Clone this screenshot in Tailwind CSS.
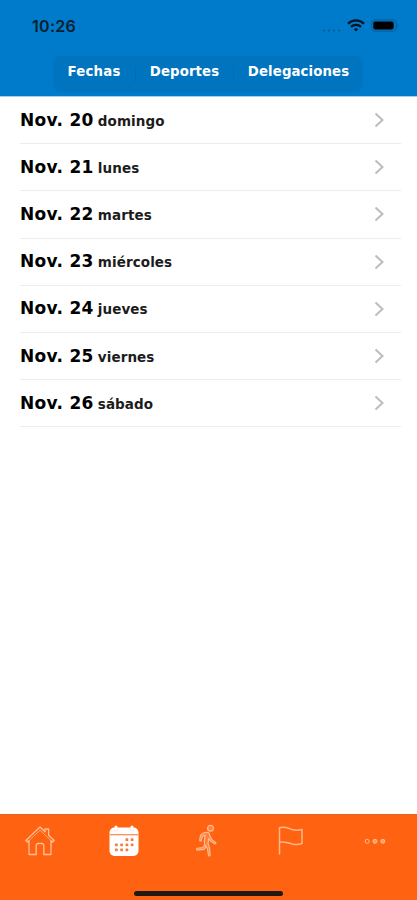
<!DOCTYPE html>
<html lang="es">
<head>
    <meta charset="UTF-8">
    <meta name="viewport" content="width=device-width, initial-scale=1.0">
    <title>Fechas</title>
    <script src="https://cdn.jsdelivr.net/npm/@tailwindcss/browser@4"></script>
</head>
<body class="bg-white text-black font-['DejaVu_Sans',sans-serif]">
    <div class="h-[900px] w-[417px] flex flex-col overflow-hidden">
        <!-- Header -->
        <header class="h-[96px] shrink-0 bg-[#007bcb] box-content border-b border-[#a5cdec]">
            <div class="h-[51px] flex items-center justify-between pl-8 pr-[18px]">
                <span class="font-['Inter',sans-serif] font-semibold text-[16px] tracking-[0.3px] text-[#06202f]">10:26</span>
                <div class="flex items-center">
                    <svg class="mr-[5px] mt-[4px]" width="20" height="14" viewBox="0 0 20 14" fill="#075c96">
                        <circle cx="2" cy="9.5" r="1.1"/><circle cx="7" cy="9.5" r="1.1"/>
                        <circle cx="12" cy="9.5" r="1.1"/><circle cx="17" cy="9.5" r="1.1"/>
                    </svg>
                    <svg class="mr-[6px] -mt-px" width="18" height="13" viewBox="0 0 18 13" fill="none" stroke="#03141f" stroke-width="2.2">
                        <path d="M1 4.7a11.5 11.5 0 0 1 16 0"/>
                        <path d="M4 7.9a7.2 7.2 0 0 1 10 0"/>
                        <path d="M9 12.4 6.8 10.3a3.2 3.2 0 0 1 4.4 0z" fill="#03141f" stroke="none"/>
                    </svg>
                    <svg width="28" height="13" viewBox="0 0 28 13">
                        <rect x="0.8" y="0.8" width="24.4" height="11.4" rx="3.6" fill="none" stroke="#0561a0" stroke-width="1.2"/>
                        <rect x="2.3" y="2.6" width="20.4" height="7.8" rx="1.8" fill="#000"/>
                        <path d="M26.3 4.6v3.8c1.5-.6 1.5-3.2 0-3.8z" fill="#0561a0"/>
                    </svg>
                </div>
            </div>
            <nav class="mt-[5px] ml-[53px] h-[36px] w-[310px] flex items-center rounded-lg bg-[#0074bf] text-white text-[13.3px] font-bold text-center">
                <span class="w-[82px] pb-[5px] tracking-[0.2px]">Fechas</span>
                <span class="h-4 w-px bg-[#006cb3]"></span>
                <span class="w-[97px] pb-[5px] tracking-[0.1px]">Deportes</span>
                <span class="h-4 w-px bg-[#006cb3]"></span>
                <span class="w-[129px] pb-[5px] tracking-[0.1px]">Delegaciones</span>
            </nav>
        </header>

        <!-- Dates -->
        <ul id="dates" class="flex-1 pl-5 pr-4"></ul>

        <!-- Tab bar -->
        <footer class="h-[86px] shrink-0 flex flex-col items-center bg-[#ff6210] border-t border-[#e6641f]">
            <div class="h-[76px] w-[419px] -ml-[2px] self-start grid grid-cols-5 justify-items-center pt-[8px]">
                <svg width="32" height="36" viewBox="0 0 32 36" fill="none" stroke="#ffc19b" stroke-width="1.3" stroke-linejoin="round">
                    <path d="M1.8 17.5 16 4l5 4.800V6h3.600v6.300l5.600 5.200-1.600 1.500-1.600-1.400v13.900h-7.200V22.500c0-1.400-.6-2-2-2h-3.600c-1.400 0-2 .6-2 2v9H5V17.600L3.400 19z"/>
                    <path d="m5 17.600 11-10.400 11 10.400" stroke-width="0.700"/>
                </svg>
                <svg width="32" height="36" viewBox="0 0 32 36">
                    <rect x="1.500" y="4.600" width="29" height="28.400" rx="5" fill="#fff"/>
                    <path d="M8 4v3M24 4v3" stroke="#fff" stroke-width="3" stroke-linecap="round"/>
                    <path d="M6 6q.2 2 2 2t2-2M22 6q.2 2 2 2t2-2" stroke="#ffe0cd" stroke-width=".8" fill="none"/>
                    <path d="M1.500 11.700h29" stroke="#ff8d55" stroke-width="1.300"/>
                    <g fill="#f47e42">
                        <rect x="17.500" y="15.200" width="2.800" height="2.800" rx=".6"/><rect x="22.700" y="15.200" width="2.800" height="2.800" rx=".6"/>
                        <rect x="7" y="20.400" width="2.800" height="2.800" rx=".6"/><rect x="12.200" y="20.400" width="2.800" height="2.800" rx=".6"/><rect x="17.500" y="20.400" width="2.800" height="2.800" rx=".6"/><rect x="22.700" y="20.400" width="2.800" height="2.800" rx=".6"/>
                        <rect x="7" y="25.400" width="2.800" height="2.800" rx=".6"/><rect x="12.200" y="25.400" width="2.800" height="2.800" rx=".6"/><rect x="17.500" y="25.400" width="2.800" height="2.800" rx=".6"/>
                    </g>
                </svg>
                <svg width="24" height="36" viewBox="0 0 24 36" fill="#ff8140" stroke="#ffbc94" stroke-width="1.200" stroke-linejoin="round" stroke-linecap="round">
                    <circle cx="15.500" cy="5.300" r="2.900"/>
                    <path d="m9.400 22-1.500 2.700-6 .7q-1 .9.200 1.700l7-.8 2-2.800"/>
                    <path d="M13.400 9.600c-3.500-.6-6 .5-7.600 2.300-.7 1.700-1 4-1.100 5.600q.7 1.300 1.600.1l1.100-4.300 2.600-1.200-.7 6.500c-.1 2 .2 2.900 1.500 4.200l1.700 3 1 6.500q1 1.300 1.700-.1l-.7-7.400-1.500-4.200.9-5.200 1.900 2.800 4.200 2.700q1.400 0 .6-1.300l-3.400-2.600-2.400-4.200c.1-1.500-.2-2.600-1.400-3.200z"/>
                </svg>
                <svg width="28" height="36" viewBox="0 0 28 36" fill="none" stroke="#ffb78c" stroke-width="1.500" stroke-linejoin="round" stroke-linecap="round">
                    <path d="M2.500 31V4.700C8 3.200 10.500 5 15 6.500c3 .8 6.500.8 10 .1v13.900c-3.500 1.200-6.500 1.200-10 .4-4.500-1.500-7-2.600-12.500-1.700"/>
                </svg>
                <svg width="24" height="36" viewBox="0 0 24 36" fill="#ffa06b" stroke="#ffbd96" stroke-width="1">
                    <circle cx="4.200" cy="18.300" r="2" fill="none"/><circle cx="12" cy="18.300" r="2"/><circle cx="19.800" cy="18.300" r="2"/>
                </svg>
            </div>
            <div class="h-[5px] w-[149px] rounded-full bg-[#21180f]"></div>
        </footer>
    </div>

    <script>
        const dates = [
            ['20', 'domingo'],
            ['21', 'lunes'],
            ['22', 'martes'],
            ['23', 'miércoles'],
            ['24', 'jueves'],
            ['25', 'viernes'],
            ['26', 'sábado'],
        ];

        document.getElementById('dates').innerHTML = dates.map(([num, day]) => `
            <li class="h-[47.2px] flex items-center justify-between border-b border-[#ececec] pr-4">
                <p class="flex items-baseline leading-none">
                    <span class="text-[17px] font-bold tracking-[0.3px]">Nov. ${num}</span>
                    <span class="ml-1 text-[13.5px] font-bold tracking-[0.1px] text-[#1c1c1c]">${day}</span>
                </p>
                <svg width="11" height="16" viewBox="0 0 11 16" fill="none" stroke="#bdbdbd" stroke-width="2">
                    <path d="m1.500 1.500 7 6.500-7 6.500"/>
                </svg>
            </li>`).join('');
    </script>
</body>
</html>
